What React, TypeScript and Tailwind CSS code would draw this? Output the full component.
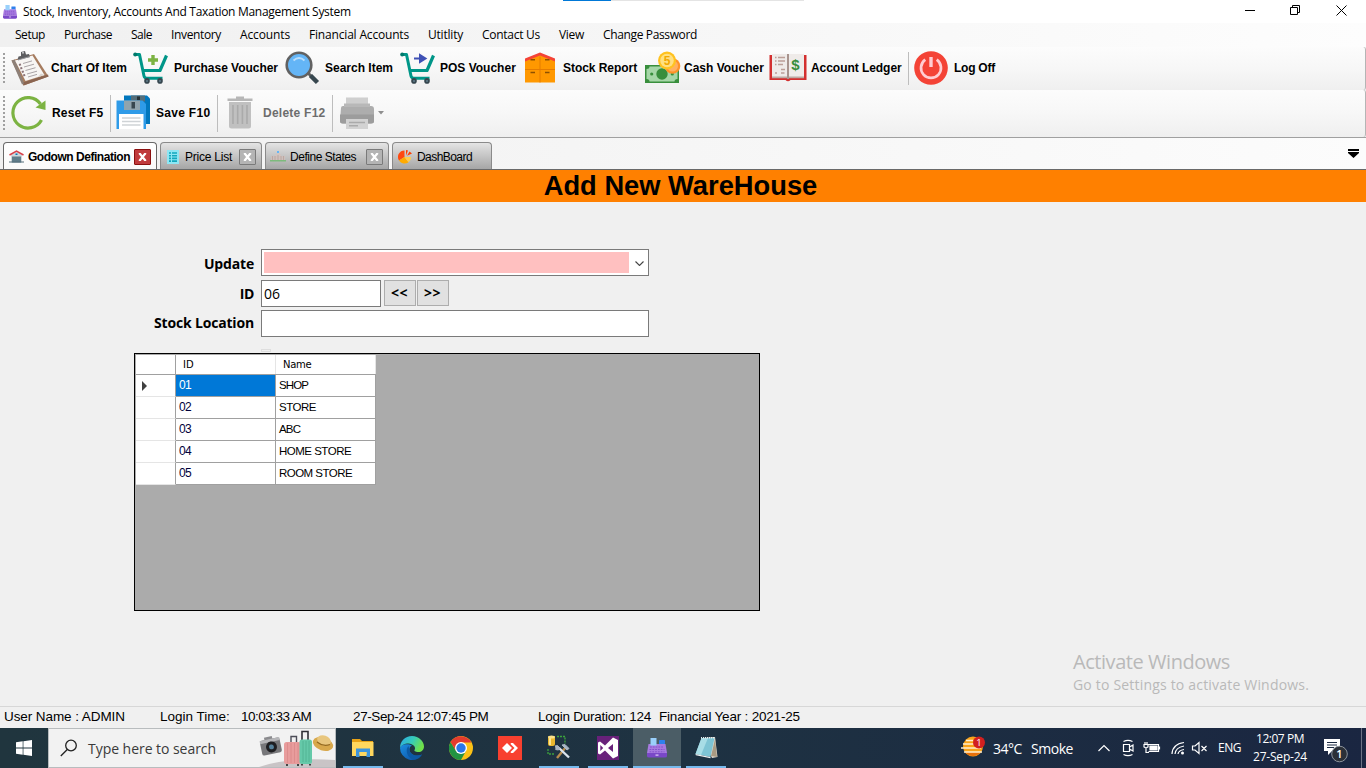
import type { ReactNode } from "react";

/* ---------- toolbar icons ---------- */

function ClipboardIcon() {
  return (
    <svg width="38" height="36" viewBox="0 0 38 36">
      <path d="M.5 10.500 L23 4 L37.500 26.500 L12.500 35.500 Z" fill="#a67c5f" />
      <path d="M12.500 35.500 L37.500 26.500 L37 24.500 L12 32.500 Z" fill="#8a6450" />
      <path d="M.5 10.500 L4 9.500 L13 33.500 L11 34.500 Z" fill="#8d8078" />
      <path d="M4 10.500 L21.500 5.500 L33.500 25 L14.500 31 Z" fill="#f7f5f3" />
      <path d="M14.500 31 L33.500 25 L30 23.500 L27 27 Z" fill="#d9d4cf" />
      <g stroke="#aaa4a6" strokeWidth="1">
        <path d="M12 13.500 l9 -2.600 M13 17 l10 -2.800 M14.500 20.500 l10 -2.800 M16 24 l10 -2.800 M17 27 l9 -2.600" />
      </g>
      <g stroke="#8c7478" strokeWidth="2">
        <path d="M8 15 l2 -.6 M9.300 18.500 l2 -.6 M10.800 22 l2 -.6 M12.200 25.500 l2 -.6" />
      </g>
      <path d="M6.500 10 L7.500 6.500 L10 6 L10 2 L14 1 L15 4.500 L18 4 L19 7 Z" fill="#5d5d60" />
      <path d="M7 10 L19 6.500" stroke="#97979b" strokeWidth="1" />
      <circle cx="12" cy="2.800" r="1" fill="#c9c9cc" />
    </svg>
  );
}

function CartIcon({ children }: { children: ReactNode }) {
  return (
    <svg width="36" height="32" viewBox="0 0 36 32">
      <path d="M1.500 2.500 H6.500 L11 24 Q11.500 26.300 14 26.300 H29.500" fill="none" stroke="#009688" strokeWidth="3" strokeLinejoin="round" />
      <path d="M9.500 18.500 H27 L33.500 3.500" fill="none" stroke="#009688" strokeWidth="3.200" strokeLinejoin="round" />
      <circle cx="2.200" cy="2.500" r="2" fill="#00796b" />
      <circle cx="14" cy="28.900" r="2.800" fill="#37474f" />
      <circle cx="27" cy="28.900" r="2.800" fill="#37474f" />
      <circle cx="14" cy="28.900" r="1" fill="#607d8b" />
      <circle cx="27" cy="28.900" r="1" fill="#607d8b" />
      {children}
    </svg>
  );
}

function SearchBigIcon() {
  return (
    <svg width="36" height="34" viewBox="0 0 36 34">
      <path d="M22.500 21.500 L27 26" stroke="#616161" strokeWidth="3" />
      <path d="M25.500 24.500 L32.500 31.500" stroke="#37474f" strokeWidth="4.500" />
      <circle cx="14" cy="14" r="12.300" fill="#64b5f6" stroke="#616161" strokeWidth="2.600" />
      <path d="M8.500 9.500 Q14 4.500 19.500 9.500" fill="none" stroke="#bbdefb" strokeWidth="1.800" />
    </svg>
  );
}

function CabinetIcon() {
  return (
    <svg width="32" height="31" viewBox="0 0 32 31">
      <path d="M1 8 L16 2 L31 8 V30.500 H1 Z" fill="#ff9800" />
      <path d="M1 6.500 L16 .5 L31 6.500 V9.500 L16 3.500 L1 9.500 Z" fill="#f44336" />
      <path d="M16 4.500 V30.500 M1 17.500 H31" stroke="#e67c00" strokeWidth="1" />
      <path d="M6.500 7.700 H11 M21 7.700 H25.500 M6.500 20.500 H11 M21 20.500 H25.500" stroke="#8d5000" strokeWidth="1.600" />
    </svg>
  );
}

function CashIcon() {
  return (
    <svg width="37" height="33" viewBox="0 0 37 33">
      <rect x="1" y="14" width="34" height="18" fill="#388e3c" />
      <path d="M2.500 18 Q5.500 18 5.500 15.500 H30.500 Q30.500 18 33.500 18 V28 Q30.500 28 30.500 30.500 H5.500 Q5.500 28 2.500 28 Z" fill="#a5d6a7" />
      <circle cx="18" cy="23" r="5.700" fill="#388e3c" />
      <circle cx="7.700" cy="23" r="1.600" fill="#388e3c" />
      <circle cx="28.300" cy="23" r="1.600" fill="#388e3c" />
      <circle cx="28.500" cy="15" r="7.800" fill="#ff9228" />
      <circle cx="28.500" cy="15" r="5.500" fill="#ffb060" />
      <circle cx="23" cy="9.500" r="9" fill="#ffc21f" />
      <circle cx="23" cy="9.500" r="6.800" fill="#ffe082" />
      <text x="23" y="13.800" textAnchor="middle" fontFamily="Liberation Sans, sans-serif" fontWeight="700" fontSize="12" fill="#f2a900">5</text>
    </svg>
  );
}

function LedgerIcon() {
  return (
    <svg width="38" height="30" viewBox="0 0 38 30">
      <path d="M.5 2 H37.500 V27 H21.500 Q19 29.500 16.500 27 H.5 Z" fill="#d32f2f" />
      <path d="M3 1 H18.500 V24 H3 Z" fill="#efebe9" />
      <path d="M19.500 1 H35 V24 H19.500 Z" fill="#efebe9" />
      <path d="M3 23.500 H18.500 V25.300 H3 Z M19.500 23.500 H35 V25.300 H19.500 Z" fill="#bcaaa4" />
      <rect x="18" y="1" width="2" height="25" fill="#a8948e" />
      <path d="M6 4.500 H7.500 M9 4.500 H16 M6 8 H7.500 M9 8 H16 M6 11.500 H7.500 M9 11.500 H14 M12 16.500 H16 M6 20 H8 M12 20 H15.500" stroke="#bc9f98" strokeWidth="1.600" />
      <text x="26.500" y="17" textAnchor="middle" fontFamily="Liberation Sans, sans-serif" fontWeight="700" fontSize="15" fill="#388e3c">$</text>
    </svg>
  );
}

function PowerIcon() {
  return (
    <svg width="34" height="34" viewBox="0 0 34 34">
      <circle cx="17" cy="17" r="16.800" fill="#f44336" />
      <path d="M11.300 8.700 A10 10 0 1 0 22.700 8.700" fill="none" stroke="#ffcdd2" strokeWidth="2.700" />
      <path d="M17 6 V16" stroke="#ffcdd2" strokeWidth="3.400" />
    </svg>
  );
}

function ResetIcon() {
  return (
    <svg width="36" height="35" viewBox="0 0 36 35">
      <path d="M30.500 25 A15.200 15.200 0 1 1 29.500 9" fill="none" stroke="#7cb342" strokeWidth="3.200" />
      <path d="M24.500 12.500 L34.500 15 L34.500 5.500 Z" fill="#7cb342" />
    </svg>
  );
}

function SaveIcon() {
  return (
    <svg width="36" height="35" viewBox="0 0 36 35">
      <path d="M8 .5 H31 L34 3.500 V29 H8 Z" fill="#0277bd" />
      <rect x="15" y=".5" width="14" height="6" fill="#546e7a" />
      <rect x="21" y="1.500" width="3" height="4" fill="#263238" />
      <path d="M.5 5.500 H26.500 L30 9 V34 H.5 Z" fill="#2f9be8" />
      <rect x="8" y="5.500" width="16" height="9.500" fill="#90a4ae" />
      <rect x="15.500" y="7" width="3.500" height="6.500" fill="#37474f" />
      <rect x="3" y="19" width="24.500" height="15" fill="#fff" />
      <path d="M6 23 H24.500 M6 26.500 H24.500 M6 30 H24.500" stroke="#cfd3d6" strokeWidth="1.300" />
    </svg>
  );
}

function TrashIcon() {
  return (
    <svg width="26" height="33" viewBox="0 0 26 33">
      <path d="M9 .5 H17 V2.500 H25.500 V5 H.5 V2.500 H9 Z" fill="#b7b7b7" />
      <path d="M2 6 H24 V30 Q24 32.500 21.500 32.500 H4.500 Q2 32.500 2 30 Z" fill="#c0c0c0" />
      <path d="M6 9 V28 M10.700 9 V28 M15.400 9 V28 M20 9 V28" stroke="#aaa" strokeWidth="1.600" />
    </svg>
  );
}

function PrinterIcon() {
  return (
    <svg width="34" height="33" viewBox="0 0 34 33">
      <path d="M6 .5 H28 V9 H6 Z" fill="#cfcfcf" />
      <path d="M1 11 Q1 9 3 9 H31 Q34 9 34 12 V24 Q34 26.500 31 26.500 H2.500 Q0 26.500 0 24 Z" fill="#adadad" />
      <path d="M4 6.500 H30 V10 H4 Z" fill="#b8b8b8" />
      <path d="M0 17.500 H34 V24 Q34 26.500 31 26.500 H3 Q0 26.500 0 24 Z" fill="#9c9c9c" />
      <path d="M6 22 H28 V32 H6 Z" fill="#d2d2d2" />
      <path d="M9 25.500 H25 M9 28.800 H18" stroke="#aaa" strokeWidth="1.500" />
    </svg>
  );
}

/* ---------- app, tab and window icons ---------- */

function AppIcon({ size }: { size: number }) {
  return (
    <svg width={size} height={size} viewBox="0 0 20 20">
      <path d="M1.500 6 H18.500 L20 15 H0 Z" fill="#a77be0" />
      <rect x="3.500" y="0" width="6" height="7.500" fill="#9ad0fb" />
      <rect x="12" y="2" width="6" height="4" rx=".6" fill="#2f80ed" />
      <path d="M3 9 H17 M2.500 11.500 H17.500 M2.500 13.800 H17.500" stroke="#8452cc" strokeWidth="1" strokeDasharray="1.800 1" />
      <path d="M0 15 H20 V18 Q20 19.500 18 19.500 H2 Q0 19.500 0 18 Z" fill="#7a48c8" />
      <rect x="8.500" y="16.500" width="3" height="1.200" fill="#e0cff7" />
    </svg>
  );
}

function HouseTabIcon() {
  return (
    <svg width="15" height="13" viewBox="0 0 15 13">
      <path d="M2 5 L7.500 1.500 L13 5 V12.500 H2 Z" fill="#cfd8dc" />
      <path d="M.5 5 L7.500 1 L14.500 5" fill="none" stroke="#d8404a" strokeWidth="1.500" />
      <rect x="3" y="6.500" width="9" height="6" fill="#607d8b" />
      <path d="M6.500 3.500 h2 v1.500 h-2 Z" fill="#0277bd" />
      <path d="M0 12 H15" stroke="#546e7a" />
    </svg>
  );
}

function ListTabIcon() {
  return (
    <svg width="12" height="14" viewBox="0 0 12 14">
      <rect width="12" height="14" fill="#8fe6f3" />
      <path d="M2 3 H4 M5 3 H10 M2 5.700 H4 M5 5.700 H10 M2 8.400 H4 M5 8.400 H10 M2 11.100 H4 M5 11.100 H10" stroke="#12a8bd" strokeWidth="1.600" />
    </svg>
  );
}

function StateTabIcon() {
  return (
    <svg width="16" height="11" viewBox="0 0 16 11">
      <path d="M5 4 Q8 0 11 4 V9 H5 Z" fill="#d2c4c0" />
      <rect x="7" y="0" width="2" height="2" fill="#64b5f6" />
      <path d="M1 5 H15 V9 H1 Z" fill="#cfc0bc" />
      <path d="M2.500 5 V9 M5 5 V9 M8 4 V9 M11 5 V9 M13.500 5 V9" stroke="#b5a29d" strokeWidth=".8" />
      <rect y="9" width="16" height="1.500" fill="#7dbb7d" />
    </svg>
  );
}

function PieTabIcon() {
  return (
    <svg width="15" height="14" viewBox="0 0 15 14">
      <path d="M6.500 7 V.5 A6.500 6.500 0 0 0 1 10.500 Z" fill="#ff4a10" />
      <path d="M6.500 7 L1 10.500 A6.500 6.500 0 0 0 10.500 12.200 Z" fill="#ffab00" />
      <path d="M6.500 7 L10.500 12.200 A6.500 6.500 0 0 0 13.200 7 Z" fill="#ffcc4d" />
      <path d="M8 5.500 V0 L10 .5 Z M9 5.700 L11.500 1.500 L14 3.500 Z" fill="#ff3d00" />
    </svg>
  );
}

function CloseBox({ active }: { active?: boolean }) {
  return (
    <span className={active
      ? "flex h-4 w-[17px] shrink-0 items-center justify-center rounded-[1px] border border-[#8b1010] bg-[#c03a3c]"
      : "flex h-4 w-[17px] shrink-0 items-center justify-center rounded-[1px] border border-[#7a7a7a] bg-[#b4b4b4]"}>
      <svg width="9" height="8" viewBox="0 0 9 8">
        <path d="M1.300 0 L7.700 8 M7.700 0 L1.300 8" stroke="#fff" strokeWidth="2.200" />
      </svg>
    </span>
  );
}

/* ---------- bars ---------- */

function ToolItem({ cell, iconBox, icon, text, label }: { cell: string; iconBox: string; icon: ReactNode; text: string; label: string }) {
  return (
    <div className={`flex h-full shrink-0 items-center pb-[2px] whitespace-nowrap ${cell}`}>
      <span className={`flex shrink-0 items-center ${iconBox}`}>{icon}</span>
      <span className={`font-['Liberation_Sans',sans-serif] text-[12px] font-bold ${text}`}>{label}</span>
    </div>
  );
}

function Grip({ h }: { h: string }) {
  return <div className={`ml-[3px] w-[2px] shrink-0 bg-[repeating-linear-gradient(to_bottom,#a0a0a0_0px,#a0a0a0_2px,transparent_2px,transparent_4px)] ${h}`} />;
}

const menu: [string, string, string][] = [
  ["Setup", "w-[49px]", "tracking-[-0.46px]"],
  ["Purchase", "w-[67px]", "tracking-[-0.46px]"],
  ["Sale", "w-[40px]", "tracking-[-0.5px]"],
  ["Inventory", "w-[69px]", "tracking-[-0.36px]"],
  ["Accounts", "w-[69px]", "tracking-[-0.13px]"],
  ["Financial Accounts", "w-[119px]", "tracking-[-0.18px]"],
  ["Utitlity", "w-[54px]", "tracking-[-0.21px]"],
  ["Contact Us", "w-[77px]", "tracking-[-0.27px]"],
  ["View", "w-[44px]", "tracking-[-0.31px]"],
  ["Change Password", "w-[100px]", "tracking-[-0.36px]"],
];

const stock: [string, string, string][] = [
  ["01", "SHOP", "tracking-[-0.85px]"],
  ["02", "STORE", "tracking-[-0.5px]"],
  ["03", "ABC", "tracking-[-0.8px]"],
  ["04", "HOME STORE", "tracking-[-0.5px]"],
  ["05", "ROOM STORE", "tracking-[-0.53px]"],
];

function Tab({ box, icon, iconBox, text, label, close }: { box: string; icon: ReactNode; iconBox: string; text: string; label: string; close?: boolean }) {
  return (
    <div className={`flex h-[27px] shrink-0 items-center whitespace-nowrap rounded-t-[4px] border border-b-0 border-[#8a8a8a] bg-linear-to-b from-[#e4e4e4] to-[#a6a6a6] pt-[2px] ${box}`}>
      <span className={`flex shrink-0 items-center pb-px ${iconBox}`}>{icon}</span>
      <span className={`text-[12px] ${text}`}>{label}</span>
      {close && <CloseBox />}
    </div>
  );
}

/* ---------- taskbar ---------- */

function TaskIcon({ children, line, active }: { children: ReactNode; line?: boolean; active?: boolean }) {
  return (
    <div className={active ? "flex w-12 shrink-0 flex-col items-center bg-[#4b5d66]" : "flex w-12 shrink-0 flex-col items-center"}>
      <div className="flex h-[38px] items-center pt-px">{children}</div>
      {line && <div className={active ? "h-[2px] w-12 bg-[#76b9ed]" : "h-[2px] w-10 bg-[#76b9ed]"} />}
    </div>
  );
}

function SearchArt() {
  return (
    <svg width="76" height="38" viewBox="2 0 76 38">
      <path d="M2 38 Q30 28 78 31 V38 Z" fill="#c9c4c6" />
      <g transform="rotate(-12 14 18)">
        <rect x="4" y="10" width="20" height="15" rx="2" fill="#77777a" />
        <rect x="9" y="7.500" width="8" height="4" fill="#8b8b8e" />
        <rect x="4" y="10" width="20" height="3" fill="#b5b5b8" />
        <circle cx="14.500" cy="18" r="5.500" fill="#1f1f22" />
        <circle cx="14.500" cy="18" r="2.400" fill="#55809a" />
      </g>
      <path d="M34 14 V7.500 H39.500 V14" fill="none" stroke="#4e4e58" strokeWidth="1.400" />
      <rect x="27" y="13" width="17" height="22" rx="2.500" fill="#e89c9c" />
      <path d="M30.500 14 V34 M34 14 V34 M37.500 14 V34 M41 14 V34" stroke="#d98989" strokeWidth=".8" />
      <path d="M45 11 V2.500 H51 V11" fill="none" stroke="#2f2f35" strokeWidth="1.600" />
      <rect x="42.500" y="10.500" width="12.500" height="24.500" rx="2.500" fill="#65c9a9" />
      <path d="M46 12 V33 M49 12 V33 M52 12 V33" stroke="#4fb091" strokeWidth=".8" />
      <path d="M30 35 v2 M41 35 v2 M45 35 v1.500 M53 35 v1.500" stroke="#444" strokeWidth="2" />
      <ellipse cx="66" cy="15" rx="10.500" ry="6.500" fill="#d8a84c" transform="rotate(18 66 15)" />
      <ellipse cx="67" cy="11.500" rx="7" ry="5" fill="#e8c67e" transform="rotate(18 67 11.500)" />
      <path d="M60 13 Q66 18 73 15.500" fill="none" stroke="#94691f" strokeWidth="1.300" />
    </svg>
  );
}

function ExplorerIcon() {
  return (
    <svg width="22" height="20" viewBox="0 0 22 20">
      <path d="M0 1 H8 L10 3 H21 V18 H0 Z" fill="#e8a317" />
      <path d="M0 4 H21.500 V18 H0 Z" fill="#ffd75e" />
      <path d="M4 19 V10.500 H18 V19 H14.500 V14 H7.500 V19 Z" fill="#3c94dc" />
      <path d="M7.500 14 h7 v2.500 h-7 Z" fill="#ffd75e" />
    </svg>
  );
}

function EdgeIcon() {
  return (
    <svg width="24" height="24" viewBox="0 0 24 24">
      <defs>
        <linearGradient id="edgeTop" x1="0" y1="0" x2="1" y2="0.4"><stop offset="0" stopColor="#2ba8e8" /><stop offset=".55" stopColor="#36cbb9" /><stop offset="1" stopColor="#6fe04a" /></linearGradient>
        <linearGradient id="edgeBody" x1="0" y1="0" x2="1" y2="1"><stop offset="0" stopColor="#1b8fe2" /><stop offset="1" stopColor="#0b4a9e" /></linearGradient>
      </defs>
      <path d="M0 12 A12 12 0 0 0 22 18.500 C17 21 10 19 9.500 14 C9.300 11.500 10.800 10 12 9.500 C8 7 1 8 0 12 Z" fill="url(#edgeBody)" />
      <path d="M0 12 C0 5 5 0 12 0 C19 0 24 5.500 24 10.500 C24 14 21.500 16 18.500 16 C15 16 14 14.700 14.500 14 C16.500 11.500 13 7.500 8.500 7.500 C4.500 7.500 1 9.500 0 12 Z" fill="url(#edgeTop)" />
      <path d="M8.500 10 C5 13 6.500 22 14 23.800 C17.500 23.500 20.500 21.500 22 18.500 C17 21 10 19 9.500 14 Z" fill="#0c59a4" />
    </svg>
  );
}

function ChromeIcon() {
  return (
    <svg width="24" height="24" viewBox="0 0 24 24">
      <circle cx="12" cy="12" r="12" fill="#fbc116" />
      <path d="M1.600 6 A12 12 0 0 0 12 24 L17 14.700 L7 14.700 Z" fill="#229342" />
      <path d="M1.600 6 A12 12 0 0 1 22.400 6.500 H12 L7 14.800 Z" fill="#e33b2e" />
      <circle cx="12" cy="12" r="6" fill="#fff" />
      <circle cx="12" cy="12" r="4.700" fill="#2a77e8" />
    </svg>
  );
}

function AnyDeskIcon() {
  return (
    <svg width="24" height="24" viewBox="0 0 24 24">
      <rect width="24" height="24" fill="#f8402f" />
      <path d="M9 7 L14 12 L9 17 L4 12 Z" fill="#fff" />
      <path d="M13 7 L15 7 L20 12 L15 17 L13 17 L12.500 16 L16.500 12 L12.500 8 Z" fill="#fff" />
    </svg>
  );
}

function SqlIcon() {
  return (
    <svg width="24" height="25" viewBox="0 0 24 25">
      <path d="M10 1.500 H18 V9 M1 14 V19 H8" fill="none" stroke="#3ca33c" strokeWidth="1.300" strokeDasharray="2 1" />
      <rect x="1" y="1" width="7" height="10" rx="2" fill="#e9b72e" />
      <path d="M3 2 V10" stroke="#fff1b0" strokeWidth="1.600" />
      <ellipse cx="4.500" cy="2" rx="3.500" ry="1.500" fill="#fbe088" />
      <path d="M10 23 L19 12" stroke="#b78b4e" strokeWidth="2.400" />
      <path d="M12 13 L22 22.500" stroke="#dbe4ee" strokeWidth="2.400" />
      <path d="M8 11 L10.500 10.500 L13 13 L11.500 15 L8.500 14.500 M15 10 L18 9.500 L22 13.500 L20 15 Z" fill="#a9b6c4" stroke="#a9b6c4" />
    </svg>
  );
}

function VsIcon() {
  return (
    <svg width="22" height="24" viewBox="0 0 22 24">
      <rect width="22" height="24" fill="#68217a" />
      <path d="M16 1.500 L21 4 V20 L16 22.500 L8 14.500 L3 18.500 L1 17.500 V6.500 L3 5.500 L8 9.500 Z M3.300 9 V15 L6.200 12 Z M16 8 L11 12 L16 16 Z" fill="#fff" fillRule="evenodd" />
    </svg>
  );
}

function NotepadIcon() {
  return (
    <svg width="23" height="23" viewBox="0 0 23 23">
      <path d="M7 2 L20 1 L22.500 21 L17 22 Z" fill="#e2ddd2" />
      <path d="M16 20 L20 3 L22 21 Z" fill="#a99b83" />
      <path d="M6.500 2 L19.500 2 L15.500 21 L.5 18 Z" fill="#7ec4d4" />
      <path d="M6.500 2 L13 2 L6 19 L.5 18 Z" fill="#a8dde6" />
      <path d="M.5 18 L15.500 21 V22.300 L.8 19.300 Z" fill="#f2f2f2" />
      <path d="M6 1.800 H20" stroke="#e6eef0" strokeWidth="1.600" strokeDasharray="1 1" />
    </svg>
  );
}

export default function App() {
  return (
    <div className="flex h-[768px] w-[1366px] flex-col overflow-hidden bg-[#f0f0f0] font-['Liberation_Sans',sans-serif] text-black">
      {/* title bar */}
      <header className="flex h-[23px] shrink-0 justify-between bg-white">
        <div className="flex w-[563px] items-center whitespace-nowrap">
          <span className="flex w-[23px] pl-[3px]"><AppIcon size={14} /></span>
          <span className="pt-px font-['Open_Sans',sans-serif] text-[12px] tracking-[-0.29px]">Stock, Inventory, Accounts And Taxation Management System</span>
        </div>
        <div className="flex h-px w-[241px] bg-[#e4e4e4]"><div className="h-px w-12 bg-[#0078d7]" /></div>
        <div className="flex flex-1 items-start justify-end pt-[5px] pr-[18px]">
          <svg width="103" height="11" viewBox="0 0 103 11" fill="none" stroke="#000">
            <path d="M0 5.500 H10 M45.500 2.500 H52.500 V9.500 H45.500 Z M47.500 2 V.5 H54.500 V7.500 H53 M91.500 .5 L101.500 10.500 M101.500 .5 L91.500 10.500" />
          </svg>
        </div>
      </header>

      {/* menu */}
      <nav className="flex h-6 shrink-0 items-center whitespace-nowrap bg-linear-to-r from-[#f0f0f0] to-[#fdfdfd] pl-[15px] font-['Open_Sans',sans-serif] text-[12px]">
        {menu.map(([t, w, s]) => <span key={t} className={`shrink-0 ${w} ${s}`}>{t}</span>)}
      </nav>

      {/* toolbars */}
      <div className="flex h-[43px] shrink-0 items-center rounded-r-[3px] border-r border-[#b5b5b5] bg-linear-to-b from-[#fcfcfc] via-[#f7f7f7] to-[#efefef]">
        <Grip h="h-[31px]" />
        <ToolItem cell="ml-[6px] w-[122px]" iconBox="w-[40px]" icon={<ClipboardIcon />} text="" label="Chart Of Item" />
        <ToolItem cell="w-[152px]" iconBox="w-[41px]" icon={<CartIcon><path d="M20 3 V13 M15 8 H25" stroke="#7cb342" strokeWidth="3.400" /></CartIcon>} text="tracking-[-0.03px]" label="Purchase Voucher" />
        <ToolItem cell="w-[115px]" iconBox="w-[40px]" icon={<SearchBigIcon />} text="" label="Search Item" />
        <ToolItem cell="w-[124px]" iconBox="w-[40px]" icon={<CartIcon><path d="M14 6.500 H20 M20 6.500 V3 L25.500 6.500 L20 10 Z" stroke="#3f51b5" strokeWidth="2" fill="#3f51b5" /></CartIcon>} text="" label="POS Voucher" />
        <ToolItem cell="w-[120px]" iconBox="w-[39px]" icon={<CabinetIcon />} text="tracking-[-0.05px]" label="Stock Report" />
        <ToolItem cell="w-[125px]" iconBox="w-[40px]" icon={<CashIcon />} text="" label="Cash Voucher" />
        <ToolItem cell="w-[139px]" iconBox="w-[42px]" icon={<LedgerIcon />} text="tracking-[-0.05px]" label="Account Ledger" />
        <div className="h-[33px] w-px bg-[#bdbdbd]" />
        <ToolItem cell="ml-[5px] w-[100px]" iconBox="w-[40px]" icon={<PowerIcon />} text="tracking-[-0.25px]" label="Log Off" />
      </div>
      <div className="flex h-[47px] shrink-0 items-center rounded-r-[3px] border-r border-[#b5b5b5] bg-linear-to-b from-[#fcfcfc] via-[#f7f7f7] to-[#efefef]">
        <Grip h="h-[35px]" />
        <ToolItem cell="ml-[6px] w-[99px]" iconBox="w-[41px]" icon={<ResetIcon />} text="tracking-[0.15px]" label="Reset F5" />
        <div className="h-[37px] w-px bg-[#bdbdbd]" />
        <ToolItem cell="ml-[5px] w-[101px]" iconBox="w-[40px]" icon={<SaveIcon />} text="tracking-[0.3px]" label="Save F10" />
        <div className="h-[37px] w-px bg-[#bdbdbd]" />
        <ToolItem cell="ml-[9px] w-[105px] text-[#6d6d6d]" iconBox="w-[36px]" icon={<TrashIcon />} text="tracking-[0.25px]" label="Delete F12" />
        <div className="h-[37px] w-px bg-[#bdbdbd]" />
        <div className="ml-[7px] flex items-center gap-1 pb-px">
          <PrinterIcon />
          <svg width="6" height="4" viewBox="0 0 6 4"><path d="M0 0 H6 L3 3.500 Z" fill="#8e8e8e" /></svg>
        </div>
      </div>

      {/* tabs */}
      <div className="flex h-[33px] shrink-0 items-end justify-between border-t border-b border-t-[#a0a0a0] border-b-[#696969] bg-linear-to-r from-[#f0f0f0] to-[#fcfcfc]">
        <div className="flex items-end pl-[3px]">
          <div className="mr-[3px] flex h-[27px] w-[154px] items-center whitespace-nowrap rounded-t-[4px] border border-b-0 border-[#696969] bg-linear-to-b from-white to-[#fafafa] pt-[2px] pl-[5px]">
            <span className="flex w-[19px] shrink-0 items-center pb-px"><HouseTabIcon /></span>
            <span className="w-[106px] text-[12px] font-bold tracking-[-0.47px]">Godown Defination</span>
            <CloseBox active />
          </div>
          <Tab box="mr-[3px] w-[102px] pl-[6px]" iconBox="w-[18px]" icon={<ListTabIcon />} text="w-[54px] tracking-[-0.23px]" label="Price List" close />
          <Tab box="mr-[3px] w-[124px] pl-[4px]" iconBox="w-[20px]" icon={<StateTabIcon />} text="w-[76px] tracking-[-0.46px]" label="Define States" close />
          <Tab box="w-[100px] pl-[5px]" iconBox="w-[19px]" icon={<PieTabIcon />} text="tracking-[-0.56px]" label="DashBoard" />
        </div>
        <svg className="mr-[7px] mb-[11px]" width="11" height="9" viewBox="0 0 11 9"><path d="M0 0 H11 V2 H0 Z M0 3 H11 V4 L5.500 9 L0 4 Z" /></svg>
      </div>

      <h1 className="flex h-8 shrink-0 items-center justify-center bg-[#ff8000] pt-px pr-[5px] text-[27.300px] font-bold">Add New WareHouse</h1>

      {/* form */}
      <main className="flex flex-1 items-stretch justify-between pt-[47px]">
        <div className="flex flex-col pl-[134px]">
          <div className="flex h-[27px] items-center">
            <label className="w-[120px] pt-[3px] text-right font-['Open_Sans',sans-serif] text-[14px] leading-5 font-bold tracking-[-0.18px]">Update</label>
            <div className="ml-[7px] flex h-[27px] w-[388px] items-center border border-[#7a7a7a] bg-white pl-[2px]">
              <div className="h-[21px] w-[365px] bg-[#ffc0c0]" />
              <svg className="mt-px ml-[6px]" width="9" height="5" viewBox="0 0 9 5"><path d="M.5 .5 L4.500 4.500 L8.500 .5" fill="none" stroke="#444" strokeWidth="1.100" /></svg>
            </div>
          </div>
          <div className="mt-1 flex h-[27px] items-start">
            <label className="w-[120px] pt-[4px] text-right font-['Open_Sans',sans-serif] text-[14px] leading-5 font-bold tracking-[-0.4px]">ID</label>
            <div className="ml-[7px] flex h-[27px] w-[120px] items-center border border-[#7a7a7a] bg-white pb-px pl-[2px] font-['Open_Sans',sans-serif] text-[14px]">06</div>
            <button className="ml-[3px] flex h-[26px] w-8 items-center justify-center border border-[#adadad] bg-[#e1e1e1] pr-px pb-[2px] font-['Open_Sans',sans-serif] text-[14px] font-bold tracking-[0.6px]">&lt;&lt;</button>
            <button className="ml-px flex h-[26px] w-8 items-center justify-center border border-[#adadad] bg-[#e1e1e1] pr-px pb-[2px] font-['Open_Sans',sans-serif] text-[14px] font-bold tracking-[0.6px]">&gt;&gt;</button>
          </div>
          <div className="mt-[3px] flex h-[27px] items-center">
            <label className="w-[120px] pb-[2px] text-right font-['Open_Sans',sans-serif] text-[14px] leading-5 font-bold tracking-[-0.17px]">Stock Location</label>
            <div className="ml-[7px] h-[27px] w-[388px] border border-[#7a7a7a] bg-white" />
          </div>
          <div className="mt-3 ml-[127px] h-[3px] w-[10px] border border-[#dedede]" />
          <div className="mt-px flex h-[258px] w-[626px] flex-col items-start border border-black bg-[#ababab] pt-px pl-px">
            <div className="flex h-5 w-[240px] border-b border-[#a0a0a0] bg-white font-['DejaVu_Sans',sans-serif] text-[10px] leading-[20px]">
              <div className="w-10 border-r border-[#a0a0a0]" />
              <div className="w-[100px] border-r border-[#e5e5e5] pl-[7px]">ID</div>
              <div className="w-[100px] border-r border-[#e5e5e5] pl-[7px] tracking-[-0.3px]">Name</div>
            </div>
            {stock.map(([id, name, tr], i) => (
              <div key={id} className="flex h-[22px] w-[240px] bg-white text-[11.500px] leading-[21px] whitespace-nowrap">
                <div className="flex w-10 items-center border-r border-b border-r-[#a0a0a0] border-b-[#e5e5e5] pl-[6px]">
                  {i === 0 && <svg width="5" height="10" viewBox="0 0 5 10"><path d="M0 0 L5 5 L0 10 Z" fill="#404040" /></svg>}
                </div>
                <div className={i === 0
                  ? "w-[100px] border-r border-b border-[#a0a0a0] bg-[#0078d7] pl-[3px] text-[12px] tracking-[-0.67px] text-white"
                  : "w-[100px] border-r border-b border-[#a0a0a0] pl-[3px] text-[12px] tracking-[-0.67px] text-[#00003a]"}>{id}</div>
                <div className={`w-[100px] border-r border-b border-[#a0a0a0] pl-[3px] ${tr}`}>{name}</div>
              </div>
            ))}
          </div>
        </div>
        <div className="flex w-[293px] flex-col justify-end pb-[11px] font-['Open_Sans',sans-serif] whitespace-nowrap text-[#b9b9b9]">
          <p className="text-[20px] leading-[26px] tracking-[-0.45px]">Activate Windows</p>
          <p className="text-[14px] leading-[20px] tracking-[0.19px]">Go to Settings to activate Windows.</p>
        </div>
      </main>

      {/* status bar */}
      <div className="flex h-[22px] shrink-0 items-center border-t border-[#d7d7d7] pl-1 text-[13.500px] whitespace-nowrap">
        <span className="w-[156px] tracking-[-0.08px]">User Name : ADMIN</span>
        <span className="w-[81px] tracking-[0px]">Login Time:</span>
        <span className="w-[112px] tracking-[-0.5px]">10:03:33 AM</span>
        <span className="w-[185px] tracking-[-0.38px]">27-Sep-24 12:07:45 PM</span>
        <span className="w-[121px] tracking-[-0.25px]">Login Duration: 124</span>
        <span className="tracking-[-0.2px]">Financial Year : 2021-25</span>
      </div>

      {/* taskbar */}
      <footer className="flex h-10 shrink-0 bg-linear-to-r from-[#20353e] via-[#1e3242] to-[#1a2641] font-['Open_Sans',sans-serif] whitespace-nowrap text-white">
        <div className="flex w-12 shrink-0 items-center justify-center">
          <svg width="16" height="16" viewBox="0 0 16 16" fill="#fff"><path d="M0 2.300 L6.700 1.300 V7.600 H0 Z M7.400 1.200 L16 0 V7.600 H7.400 Z M0 8.400 H6.700 V14.700 L0 13.700 Z M7.400 8.400 H16 V16 L7.400 14.800 Z" /></svg>
        </div>
        <div className="flex w-[288px] shrink-0 items-center border border-[#b8bcbe] bg-[#f2f2f2] text-[#3a3a3a]">
          <svg className="ml-[11px]" width="18" height="18" viewBox="0 0 18 18" fill="none" stroke="#222" strokeWidth="1.300"><circle cx="11" cy="6.500" r="5.300" /><path d="M7.300 10.500 L.8 17" /></svg>
          <span className="ml-[10px] w-[120px] text-[14px] tracking-[-0.04px]">Type here to search</span>
          <span className="ml-auto flex"><SearchArt /></span>
        </div>
        <div className="flex flex-1 gap-px pl-[3px]">
          <TaskIcon line><ExplorerIcon /></TaskIcon>
          <TaskIcon><EdgeIcon /></TaskIcon>
          <TaskIcon><ChromeIcon /></TaskIcon>
          <TaskIcon><AnyDeskIcon /></TaskIcon>
          <TaskIcon line><SqlIcon /></TaskIcon>
          <TaskIcon line><VsIcon /></TaskIcon>
          <TaskIcon line active><AppIcon size={20} /></TaskIcon>
          <TaskIcon line><NotepadIcon /></TaskIcon>
        </div>
        <div className="flex w-[405px] shrink-0 items-center">
          <svg width="24" height="21" viewBox="0 0 24 21" className="mb-1 shrink-0">
            <circle cx="12" cy="10.500" r="10" fill="#f9a31a" />
            <path d="M4 16 A10 10 0 0 0 20 16 Z" fill="#e8700c" />
            <path d="M2 8 H13 M5 4.500 H12 M0 12 H20 M3 16 H21" stroke="#fff0cf" strokeWidth="1.300" />
            <circle cx="18" cy="6.500" r="6" fill="#d22020" />
            <text x="18" y="10" textAnchor="middle" fontSize="9.500" fill="#fff">1</text>
          </svg>
          <span className="ml-2 w-[38px] shrink-0 text-[14px] tracking-[-0.46px]">34°C</span>
          <span className="w-[67px] shrink-0 text-[14px] tracking-[-0.46px]">Smoke</span>
          <svg width="112" height="18" viewBox="0 0 112 18" fill="none" stroke="#fff" strokeWidth="1.200" className="shrink-0">
            <path d="M.5 12 L6 6.500 L11.500 12" />
            <path d="M25.500 5.500 H31.500 V12.500 H25.500 Z M31.500 8 L35 6 V12 L31.500 10 M25.500 2.500 Q30 .3 34.500 2.500 M25.500 15.500 Q30 17.700 34.500 15.500" />
            <path d="M50.500 5.500 H60.500 V12.500 H50.500 M61.500 7.500 V10.500 M47 3 V5 M49 3 V5 M46 5.500 H50 V8 L48 9 L46 8 Z M48 9 V13.500 H51" />
            <path d="M52 7 H59 V11 H52 Z" fill="#fff" />
            <path d="M74 15 Q74.500 5 86 3.500 M77 15 Q77.500 8.500 86 7 M80 15 Q80.500 11.500 86 10.500" />
            <circle cx="84.500" cy="14" r="1.500" fill="#fff" stroke="none" />
            <path d="M94.500 7 H97 L101 3.500 V14.500 L97 11 H94.500 Z M103.500 7 L108.500 12 M108.500 7 L103.500 12" />
          </svg>
          <span className="ml-2 w-[24px] shrink-0 text-[12px] tracking-[-0.48px]">ENG</span>
          <div className="ml-[5px] flex w-[66px] shrink-0 flex-col items-center text-[12px] leading-[18px]">
            <span className="tracking-[-0.47px]">12:07 PM</span>
            <span className="tracking-[-0.2px]">27-Sep-24</span>
          </div>
          <svg width="26" height="24" viewBox="0 0 26 24" className="mt-[6px] ml-[11px] shrink-0">
            <path d="M0 0 H16 V12 H8 L4 16 V12 H0 Z" fill="#fff" />
            <path d="M3 3.500 H13 M3 6 H13 M3 8.500 H10" stroke="#1c2a42" />
            <circle cx="15.500" cy="15" r="7.800" fill="#2b3038" stroke="#8c939c" />
            <text x="15.500" y="19" textAnchor="middle" fontSize="11" fontWeight="600" fill="#fff">1</text>
          </svg>
          <div className="ml-auto mr-[4px] h-10 w-px bg-[#6b7385]" />
        </div>
      </footer>
    </div>
  );
}
